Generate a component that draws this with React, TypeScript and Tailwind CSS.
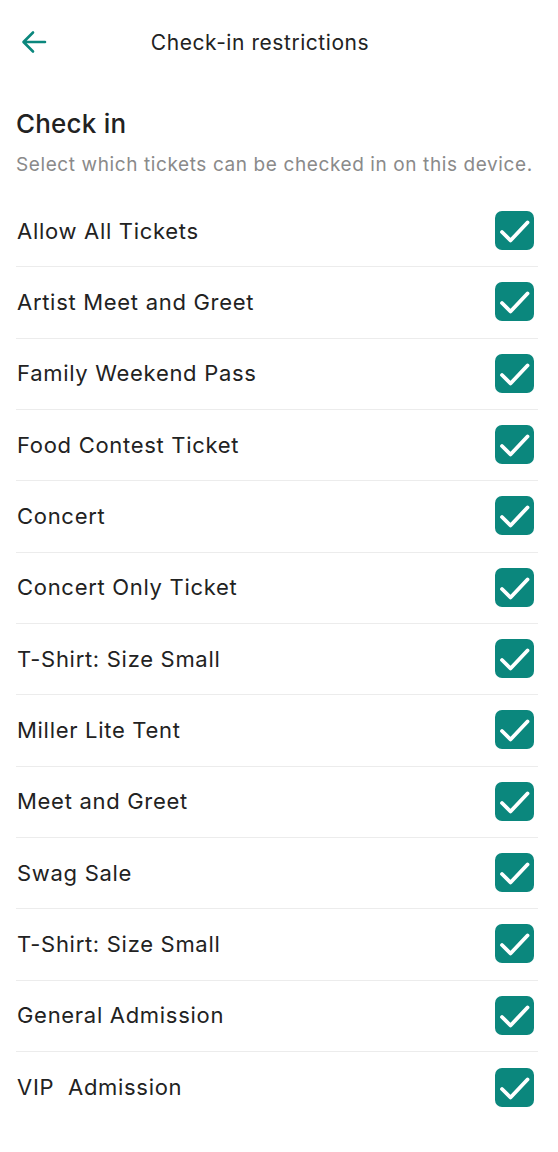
import React, { useState } from "react";

const tickets = [
  "Allow All Tickets",
  "Artist Meet and Greet",
  "Family Weekend Pass",
  "Food Contest Ticket",
  "Concert",
  "Concert Only Ticket",
  "T-Shirt: Size Small",
  "Miller Lite Tent",
  "Meet and Greet",
  "Swag Sale",
  "T-Shirt: Size Small",
  "General Admission",
  "VIP  Admission",
];

const CheckBox = ({ checked, onClick }: { checked: boolean; onClick: () => void }) => (
  <button
    onClick={onClick}
    className={`w-[39px] h-[39px] rounded-[7px] flex items-center justify-center ${
      checked ? "bg-[#0b877d]" : "border-2 border-[#0b877d] bg-white"
    }`}
  >
    {checked && (
      <svg width="39" height="39" viewBox="0 0 39 39" fill="none">
        <path
          d="M7 21l8.5 8.5L32.5 11.5"
          stroke="white"
          strokeWidth="3.8"
          strokeLinecap="round"
          strokeLinejoin="round"
        />
      </svg>
    )}
  </button>
);

export default function App() {
  const [checked, setChecked] = useState<boolean[]>(tickets.map(() => true));

  const toggle = (i: number) => {
    const next = [...checked];
    next[i] = !next[i];
    setChecked(next);
  };

  return (
    <div
      className="w-[558px] min-h-[1152px] bg-white text-[#222222]"
      style={{ fontFamily: "Inter, 'Noto Sans', sans-serif" }}
    >
      {/* header */}
      <div className="relative h-[84px] flex items-center justify-center pr-[38px]">
        <button className="absolute left-[20px] top-[29px]">
          <svg width="28" height="26" viewBox="0 0 28 26" fill="none">
            <path
              d="M25 13H4M13 3.5L3.5 13l9.5 9.5"
              stroke="#0b877d"
              strokeWidth="2.6"
              strokeLinecap="round"
              strokeLinejoin="round"
            />
          </svg>
        </button>
        <h1 className="text-[21px] tracking-[0.55px] mt-[1px]">Check-in restrictions</h1>
      </div>

      <div className="pl-[16px] pr-[20px] pt-[23px]">
        <h2 className="text-[26px] font-medium leading-[34px] tracking-[0.2px]">Check in</h2>
        <p className="mt-[12px] text-[19px] text-[#8a8a8a] leading-[24px] tracking-[0.6px] whitespace-nowrap">
          Select which tickets can be checked in on this device.
        </p>

        <div className="mt-[19px]">
          {tickets.map((t, i) => (
            <div
              key={i}
              className={`h-[71.33px] flex items-center justify-between ${
                i < tickets.length - 1 ? "border-b border-[#ececec]" : ""
              }`}
            >
              <span className="text-[22px] whitespace-pre pl-[1px] tracking-[0.7px]">{t}</span>
              <div className="mr-[4px] mb-[1px]">
                <CheckBox checked={checked[i]} onClick={() => toggle(i)} />
              </div>
            </div>
          ))}
        </div>
      </div>
    </div>
  );
}
